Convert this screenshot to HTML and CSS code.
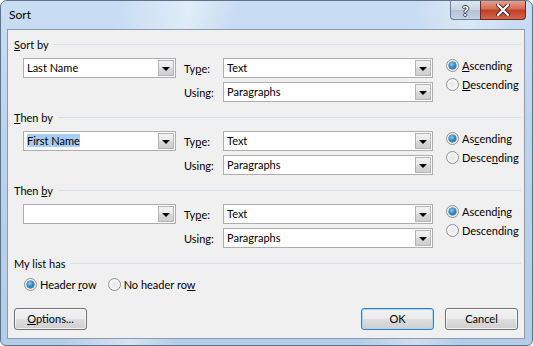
FILE: index.html
```html
<!DOCTYPE html>
<html>
	<head>
		<meta charset="UTF-8">
		<title>Sort</title>
		<link rel="stylesheet" href="styles.css">
	</head>
	<body>
	  <div class="window">
	    <div class="titlebar">
	      <div class="title">Sort</div>
	      <div class="caps">
	        <div class="cap help">?</div>
	        <div class="cap close">
	          <svg width="14" height="12" viewBox="0 0 14 12">
	            <path d="M2 1 L12 11 M12 1 L2 11" stroke="#4a2020" stroke-width="4" stroke-linecap="round"/>
	            <path d="M2 1 L12 11 M12 1 L2 11" stroke="#fff" stroke-width="2.2" stroke-linecap="round"/>
	          </svg>
	        </div>
	      </div>
	    </div>
	    <div class="client">

	      <div class="group">
	        <div class="head"><span><u>S</u>ort by</span><span class="line"></span></div>
	        <div class="body">
	          <div class="combo key"><span class="val">Last Name</span><span class="arrow"></span></div>
	          <div class="fields">
	            <div class="field"><span class="lbl">Ty<u>p</u>e:</span><div class="combo wide"><span class="val">Text</span><span class="arrow"></span></div></div>
	            <div class="field"><span class="lbl">Using:</span><div class="combo wide"><span class="val">Paragraphs</span><span class="arrow"></span></div></div>
	          </div>
	          <div class="order">
	            <div class="radio"><span class="dot on"></span><span><u>A</u>scending</span></div>
	            <div class="radio"><span class="dot"></span><span><u>D</u>escending</span></div>
	          </div>
	        </div>
	      </div>

	      <div class="group">
	        <div class="head"><span><u>T</u>hen by</span><span class="line"></span></div>
	        <div class="body">
	          <div class="combo key"><span class="val"><span class="sel">First Name</span></span><span class="arrow"></span></div>
	          <div class="fields">
	            <div class="field"><span class="lbl">Ty<u>p</u>e:</span><div class="combo wide"><span class="val">Text</span><span class="arrow"></span></div></div>
	            <div class="field"><span class="lbl">Using:</span><div class="combo wide"><span class="val">Paragraphs</span><span class="arrow"></span></div></div>
	          </div>
	          <div class="order">
	            <div class="radio"><span class="dot on"></span><span>As<u>c</u>ending</span></div>
	            <div class="radio"><span class="dot"></span><span>Desce<u>n</u>ding</span></div>
	          </div>
	        </div>
	      </div>

	      <div class="group">
	        <div class="head"><span>Then <u>b</u>y</span><span class="line"></span></div>
	        <div class="body">
	          <div class="combo key"><span class="val"></span><span class="arrow"></span></div>
	          <div class="fields">
	            <div class="field"><span class="lbl">Ty<u>p</u>e:</span><div class="combo wide"><span class="val">Text</span><span class="arrow"></span></div></div>
	            <div class="field"><span class="lbl">Using:</span><div class="combo wide"><span class="val">Paragraphs</span><span class="arrow"></span></div></div>
	          </div>
	          <div class="order">
	            <div class="radio"><span class="dot on"></span><span>Ascend<u>i</u>ng</span></div>
	            <div class="radio"><span class="dot"></span><span>Descendin<u>g</u></span></div>
	          </div>
	        </div>
	      </div>

	      <div class="group last">
	        <div class="head"><span>My list has</span><span class="line"></span></div>
	        <div class="listhas">
	          <div class="radio"><span class="dot on"></span><span>Header <u>r</u>ow</span></div>
	          <div class="radio"><span class="dot"></span><span>No header ro<u>w</u></span></div>
	        </div>
	      </div>

	      <div class="buttons">
	        <div class="btn"><u>O</u>ptions...</div>
	        <div class="spacer"></div>
	        <div class="btn def">OK</div>
	        <div class="btn">Cancel</div>
	      </div>
	    </div>
	  </div>
	</body>
</html>
```

FILE: styles.css
```css
html, body {
  margin: 0;
  padding: 0;
  background: #fff;
}
body {
  font-family: "Segoe UI", Lato, "Noto Sans", sans-serif;
  font-size: 11px;
  color: #000;
}
.window {
  width: 533px;
  height: 346px;
  box-sizing: border-box;
  border: 1px solid #5f7388;
  border-radius: 7px 7px 6px 6px;
  padding: 0 7px 6px 6px;
  display: flex;
  flex-direction: column;
  background:
    linear-gradient(100deg, rgba(255,255,255,0) 20%, rgba(255,255,255,0.45) 32%, rgba(255,255,255,0) 40%, rgba(255,255,255,0) 70%, rgba(255,255,255,0.35) 80%, rgba(255,255,255,0) 88%),
    linear-gradient(180deg, #c9def4 0%, #bcd3ec 40%, #b4cce6 100%);
}
.titlebar {
  height: 28px;
  display: flex;
  align-items: flex-start;
}
.title {
  flex: 1;
  padding: 6px 0 0 2px;
  line-height: 15px;
  font-size: 12px;
  color: #000;
}
.caps {
  display: flex;
  margin-right: -1px;
}
.cap {
  height: 19px;
  box-sizing: border-box;
  border: 1px solid #6a7f98;
  border-top: none;
  display: flex;
  align-items: center;
  justify-content: center;
}
.help {
  width: 30px;
  border-radius: 0 0 0 4px;
  border-right: none;
  background: linear-gradient(180deg, #dbe6f2 0%, #c6d4e4 50%, #b3c3d6 51%, #c4d3e3 100%);
  color: #fff;
  font-weight: bold;
  font-size: 14px;
  text-shadow: 0 0 1px #334, 1px 0 0 #445, -1px 0 0 #445, 0 1px 0 #445, 0 -1px 0 #445;
}
.close {
  width: 46px;
  border-radius: 0 0 4px 0;
  border-color: #6b2a2a;
  background: linear-gradient(180deg, #e3a08f 0%, #d66a52 45%, #c23c24 50%, #d2654c 100%);
}
.client {
  flex: 1;
  border: 1px solid #8c9bad;
  background: #f0f0f0;
  padding: 7px 3px 0 0;
  display: flex;
  flex-direction: column;
}
.group {
  height: 73px;
}
.group.last {
  height: auto;
}
.head {
  display: flex;
  align-items: center;
  height: 15px;
  line-height: 15px;
  padding-left: 6px;
}
.line {
  flex: 1;
  margin-left: 5px;
  border-top: 1px solid #d5dfe5;
  height: 0;
}
.body {
  display: flex;
  align-items: flex-start;
  padding: 6px 0 0 15px;
}
.combo {
  flex-shrink: 0;
  height: 20px;
  box-sizing: border-box;
  border: 1px solid #abadb3;
  background: #fff;
  display: flex;
  align-items: stretch;
}
.combo.key {
  width: 153px;
}
.combo.wide {
  width: 210px;
}
.val {
  flex: 1;
  line-height: 18px;
  padding-left: 3px;
  white-space: nowrap;
  overflow: hidden;
}
.sel {
  background: #a9cdf2;
}
.arrow {
  width: 16px;
  margin: 1px;
  box-sizing: border-box;
  border: 1px solid #b4b4b4;
  background: linear-gradient(180deg, #f3f3f3 0%, #e6e6e6 50%, #d9d9d9 51%, #cfcfcf 100%);
  position: relative;
}
.arrow::after {
  content: "";
  position: absolute;
  left: 3px;
  top: 6px;
  border-left: 4px solid transparent;
  border-right: 4px solid transparent;
  border-top: 4px solid #000;
}
.fields {
  flex-shrink: 0;
  margin-left: 8px;
  display: flex;
  flex-direction: column;
  gap: 4px;
}
.field {
  display: flex;
  align-items: center;
}
.lbl {
  width: 39px;
  flex-shrink: 0;
}
.order {
  flex-shrink: 0;
  margin-left: 13px;
  margin-top: -2px;
  display: flex;
  flex-direction: column;
}
.radio {
  display: flex;
  align-items: center;
  height: 19px;
  white-space: nowrap;
}
.dot {
  flex-shrink: 0;
  width: 13px;
  height: 13px;
  box-sizing: border-box;
  border-radius: 50%;
  border: 1px solid #8e8f8f;
  background: radial-gradient(circle at 50% 50%, #e6e6e6 0%, #f4f4f4 55%, #fdfdfd 100%);
  margin-right: 3px;
  position: relative;
}
.dot.on::after {
  content: "";
  position: absolute;
  left: 2px;
  top: 2px;
  width: 7px;
  height: 7px;
  border-radius: 50%;
  background: radial-gradient(circle at 40% 35%, #8fd3f8 0%, #2e8fd0 45%, #16578f 100%);
  box-shadow: 0 0 0 0.5px #1a4f7a;
}
.listhas {
  display: flex;
  gap: 11px;
  padding: 4px 0 0 16px;
}
.listhas .radio {
  height: 18px;
}
.buttons {
  display: flex;
  margin-top: 15px;
  padding-left: 6px;
  padding-right: 3px;
  gap: 11px;
}
.spacer {
  flex: 1;
}
.btn {
  width: 73px;
  height: 22px;
  box-sizing: border-box;
  border: 1px solid #707070;
  border-radius: 3px;
  background: linear-gradient(180deg, #f2f2f2 0%, #ebebeb 48%, #dddddd 52%, #cfcfcf 100%);
  box-shadow: inset 0 0 0 1px rgba(255,255,255,0.7);
  text-align: center;
  line-height: 20px;
}
.btn.def {
  border-color: #3c7fb1;
  box-shadow: inset 0 0 0 1px #9edaf8;
}
```
